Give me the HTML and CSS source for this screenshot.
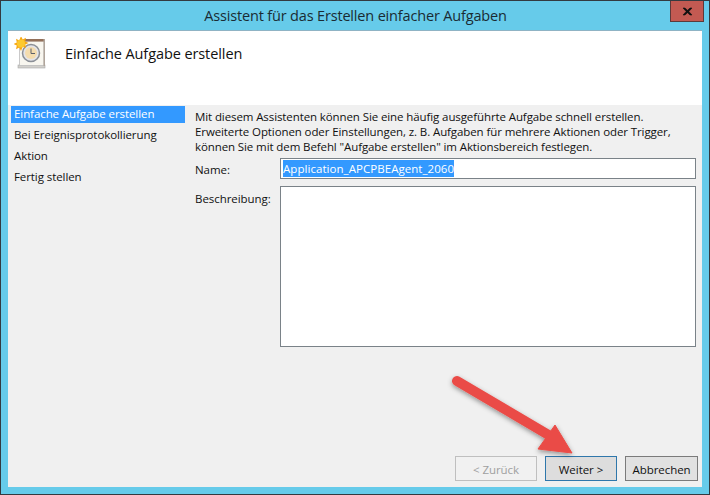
FILE: index.html
```html
<!DOCTYPE html>
<html lang="de">
<head>
<meta charset="utf-8">
<title>Assistent</title>
<link rel="stylesheet" href="styles.css">
</head>
<body>
<div class="window">
  <div class="titlebar">
    <div class="title">Assistent für das Erstellen einfacher Aufgaben</div>
    <div class="close"><svg width="11" height="9" viewBox="0 0 11 9"><path d="M1 1h2l2.500 2.300L8 1h2L6.800 4.500 10 8H8L5.500 5.700 3 8H1l3.200-3.500z" fill="#111" stroke="#111" stroke-width=".6"/></svg></div>
  </div>
  <div class="client">
    <header class="head">
      <svg class="icon" width="32" height="32" viewBox="0 0 32 32">
        <rect x="4" y="28" width="27" height="3" fill="#d2d0cc" stroke="#a8a8a8" stroke-width=".6"/>
        <rect x="5.500" y="4" width="24.500" height="24.500" fill="#f8f6ef" stroke="#bdbdbd" stroke-width=".8"/>
        <rect x="10" y="2" width="21" height="2.500" fill="#93705a"/>
        <rect x="29.500" y="2" width="1.500" height="27" fill="#b0a59b"/>
        <circle cx="17" cy="16" r="8.500" fill="#e4e4e8" stroke="#8b8f96" stroke-width="1.500"/>
        <circle cx="17" cy="16" r="6" fill="#f4dcae"/>
        <path d="M17 11.500V16.500H21" fill="none" stroke="#5d6068" stroke-width="1"/>
        <path d="M7 -1l1.700 3.500 3.300-1.700-.8 3.700 3.300 1.500-3.300 1.500.8 3.700-3.300-1.700L7 14 5.300 10.500l-3.300 1.700.8-3.700L-.5 7l3.300-1.500L2 1.800l3.300 1.700z" fill="#f7a814"/>
        <circle cx="7" cy="6.500" r="4" fill="#fcc92f"/>
      </svg>
      <h1 class="heading">Einfache Aufgabe erstellen</h1>
    </header>
    <div class="main">
      <nav class="steps">
        <div class="step step-active">Einfache Aufgabe erstellen</div>
        <div class="step">Bei Ereignisprotokollierung</div>
        <div class="step">Aktion</div>
        <div class="step">Fertig stellen</div>
      </nav>
      <section class="content">
        <p class="intro">Mit diesem Assistenten können Sie eine häufig ausgeführte Aufgabe schnell erstellen.<br>Erweiterte Optionen oder Einstellungen, z. B. Aufgaben für mehrere Aktionen oder Trigger,<br>können Sie mit dem Befehl "Aufgabe erstellen" im Aktionsbereich festlegen.</p>
        <div class="form">
          <label class="label label-name">Name:</label>
          <div class="input input-name"><span class="selected">Application_APCPBEAgent_2060</span></div>
          <label class="label label-desc">Beschreibung:</label>
          <div class="input input-desc"></div>
        </div>
      </section>
    </div>
    <footer class="buttons">
      <div class="btn btn-disabled">&lt; Zurück</div>
      <div class="btn btn-primary">Weiter &gt;</div>
      <div class="btn btn-cancel">Abbrechen</div>
    </footer>
  </div>
  <svg class="arrow" width="710" height="495" viewBox="0 0 710 495">
    <defs>
      <filter id="arrow-shadow" x="-20%" y="-20%" width="140%" height="140%">
        <feDropShadow dx="0" dy="2" stdDeviation="2.500" flood-color="#000" flood-opacity=".4"/>
      </filter>
    </defs>
    <g filter="url(#arrow-shadow)" fill="#ea4c47">
      <path d="M457 381L552 437" fill="none" stroke="#ea4c47" stroke-width="10" stroke-linecap="round"/>
      <path d="M555 425L572 453 538 449z" stroke="#ea4c47" stroke-width="1" stroke-linejoin="round"/>
    </g>
  </svg>
</div>
</body>
</html>
```
FILE: styles.css
```css
* { box-sizing: border-box; }
html, body { margin: 0; padding: 0; }
body { width: 710px; height: 495px; overflow: hidden; font-family: "Open Sans", "Noto Sans", sans-serif; color: #111; }
.window { position: relative; width: 710px; height: 495px; background: #66cbea; border: 1px solid #333a40; padding: 0 7px 7px; display: flex; flex-direction: column; }
.titlebar { height: 29px; flex: none; display: flex; justify-content: center; position: relative; }
.title { font-size: 14.500px; line-height: 30px; padding-left: 1px; color: #1a2b33; letter-spacing: -.17px; }
.close { position: absolute; top: 0; right: -2px; width: 34px; height: 21px; background: #c35a52; border: 1px solid #5c3a3a; border-top: 0; display: flex; align-items: center; justify-content: center; }
.client { flex: 1; background: #f0f0f0; display: flex; flex-direction: column; border-top: 1px solid #8fb3c4; }
.head { height: 74px; flex: none; background: #fff; display: flex; align-items: flex-start; padding: 6px 0 0 6px; }
.icon { flex: none; display: block; }
.heading { margin: 7px 0 0 19px; font-size: 14.500px; font-weight: 400; line-height: 20px; color: #111; letter-spacing: -.09px; }
.main { flex: 1; display: flex; padding-top: 1px; }
.steps { width: 174px; flex: none; margin-left: 3px; }
.step { height: 17px; margin-bottom: 4px; padding-left: 3px; font-size: 11.500px; line-height: 16px; letter-spacing: -.08px; }
.step-active { background: #3399ff; color: #fff; }
.content { flex: 1; padding: 3px 6px 0 10px; }
.intro { margin: 0; font-size: 11.500px; line-height: 15px; letter-spacing: -.1px; color: #111; white-space: nowrap; }
.form { margin-top: 4px; display: grid; grid-template-columns: 85px 1fr; row-gap: 7px; font-size: 11.500px; }
.label { line-height: 17px; letter-spacing: -.05px; }
.label-name { padding-top: 3px; }
.label-desc { padding-top: 4px; }
.input { background: #fff; border: 1px solid #7a8288; }
.input-name { height: 21px; padding: 1px 2px; line-height: 17px; white-space: nowrap; }
.input-desc { height: 161px; }
.selected { display: inline-block; background: #3399ff; color: #fff; letter-spacing: .05px; height: 17px; }
.buttons { height: 44px; flex: none; display: flex; justify-content: flex-end; align-items: flex-start; gap: 8px; padding: 13px 4px 0 0; }
.btn { height: 25px; font-size: 11.500px; line-height: 25px; text-align: center; border: 1px solid #7b7b7b; background: #e1e1e1; letter-spacing: -.05px; }
.btn-disabled { width: 82px; border-color: #bfbfbf; background: #f1f1f1; color: #a0a0a0; }
.btn-primary { width: 72px; border-color: #2f77ab; background: #dddddd; }
.btn-cancel { width: 73px; background: #e1e1e1; }
.arrow { position: absolute; left: -1px; top: -1px; pointer-events: none; }
```
